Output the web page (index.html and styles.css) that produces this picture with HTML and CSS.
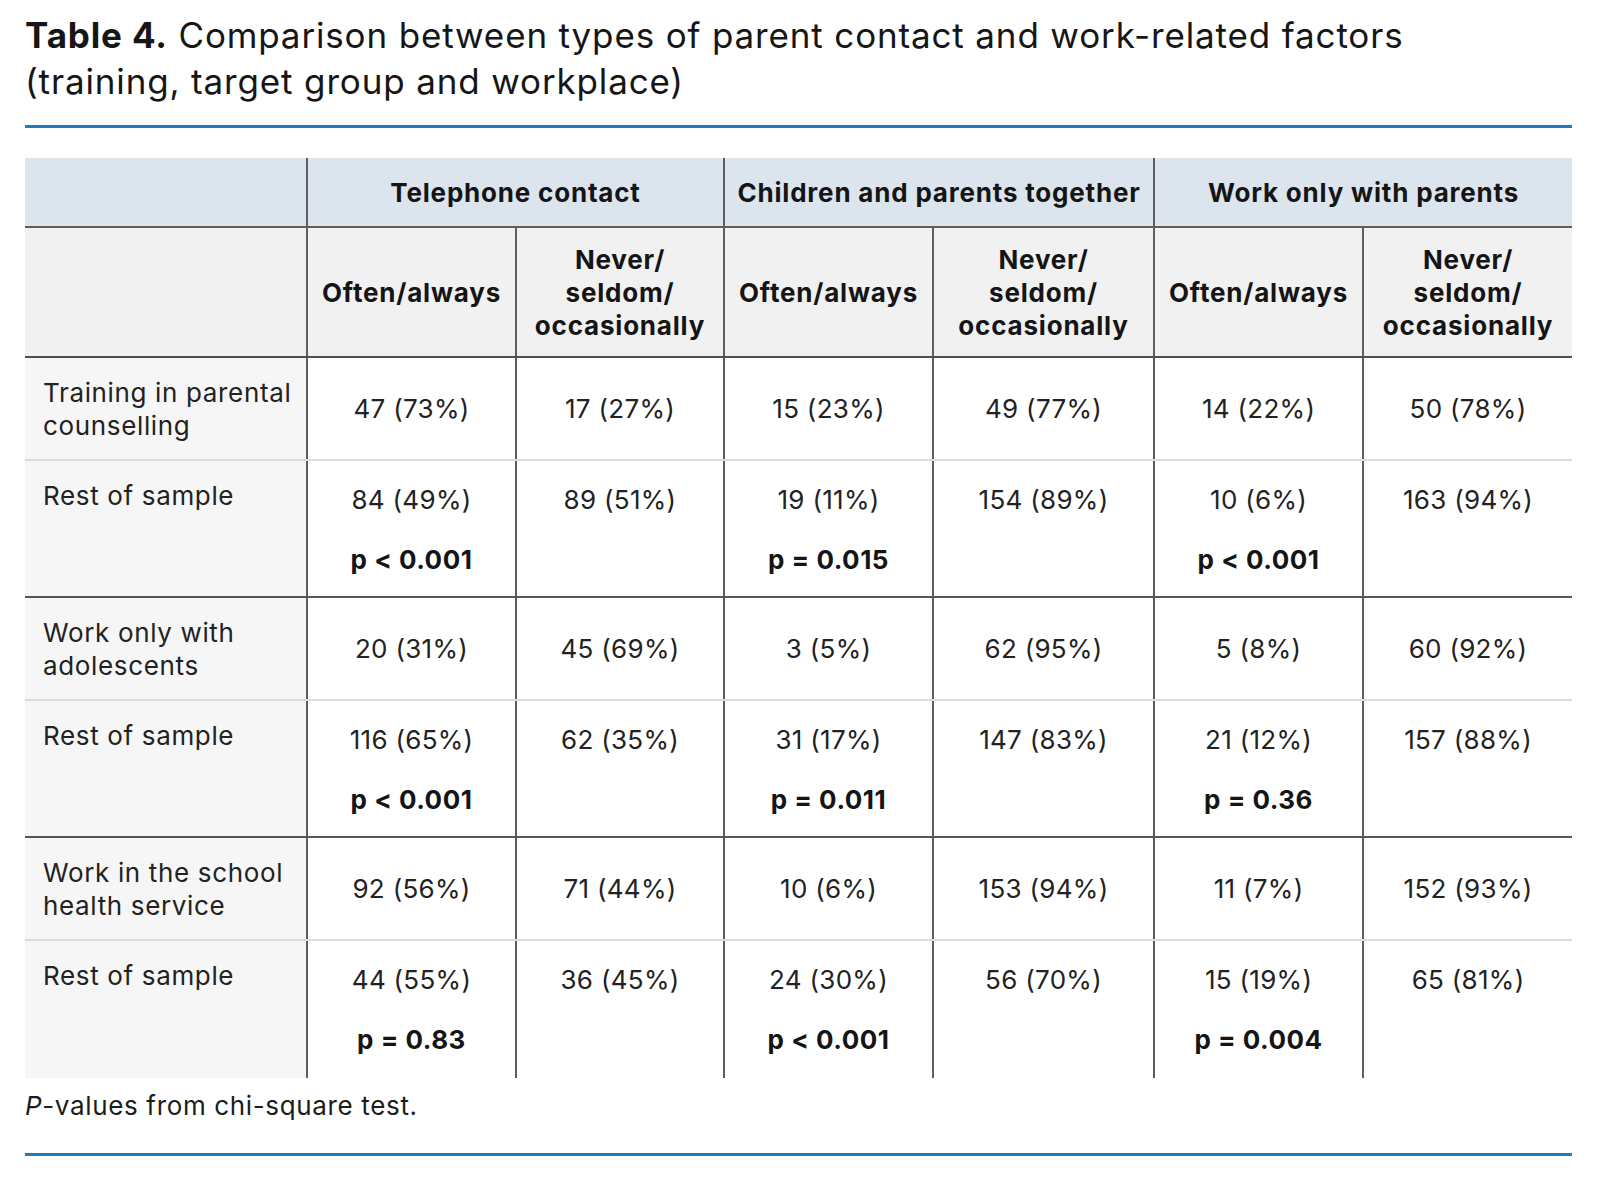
FILE: index.html
```html
<!DOCTYPE html>
<html lang="en">
<head>
<meta charset="utf-8">
<title>Table 4</title>
<link rel="stylesheet" href="styles.css">
</head>
<body>
<div class="page">
  <h1 class="title"><strong>Table 4.</strong> Comparison between types of parent contact and work-related factors (training, target group and workplace)</h1>
  <div class="rule"></div>
  <table class="data">
    <colgroup>
      <col class="c-label">
      <col class="c-209">
      <col class="c-208">
      <col class="c-209">
      <col class="c-221">
      <col class="c-209">
      <col class="c-209">
    </colgroup>
    <thead>
      <tr class="group">
        <th></th>
        <th colspan="2">Telephone contact</th>
        <th colspan="2">Children and parents together</th>
        <th colspan="2">Work only with parents</th>
      </tr>
      <tr class="sub">
        <th></th>
        <th>Often/always</th>
        <th>Never/<br>seldom/<br>occasionally</th>
        <th>Often/always</th>
        <th>Never/<br>seldom/<br>occasionally</th>
        <th>Often/always</th>
        <th>Never/<br>seldom/<br>occasionally</th>
      </tr>
    </thead>
    <tbody>
      <tr class="first">
        <td class="label">Training in parental counselling</td>
        <td>47 (73%)</td><td>17 (27%)</td><td>15 (23%)</td><td>49 (77%)</td><td>14 (22%)</td><td>50 (78%)</td>
      </tr>
      <tr class="rest">
        <td class="label">Rest of sample</td>
        <td><div>84 (49%)</div><div class="p">p &lt; 0.001</div></td>
        <td><div>89 (51%)</div></td>
        <td><div>19 (11%)</div><div class="p">p = 0.015</div></td>
        <td><div>154 (89%)</div></td>
        <td><div>10 (6%)</div><div class="p">p &lt; 0.001</div></td>
        <td><div>163 (94%)</div></td>
      </tr>
      <tr class="first">
        <td class="label">Work only with adolescents</td>
        <td>20 (31%)</td><td>45 (69%)</td><td>3 (5%)</td><td>62 (95%)</td><td>5 (8%)</td><td>60 (92%)</td>
      </tr>
      <tr class="rest">
        <td class="label">Rest of sample</td>
        <td><div>116 (65%)</div><div class="p">p &lt; 0.001</div></td>
        <td><div>62 (35%)</div></td>
        <td><div>31 (17%)</div><div class="p">p = 0.011</div></td>
        <td><div>147 (83%)</div></td>
        <td><div>21 (12%)</div><div class="p">p = 0.36</div></td>
        <td><div>157 (88%)</div></td>
      </tr>
      <tr class="first">
        <td class="label">Work in the school health service</td>
        <td>92 (56%)</td><td>71 (44%)</td><td>10 (6%)</td><td>153 (94%)</td><td>11 (7%)</td><td>152 (93%)</td>
      </tr>
      <tr class="rest last">
        <td class="label">Rest of sample</td>
        <td><div>44 (55%)</div><div class="p">p = 0.83</div></td>
        <td><div>36 (45%)</div></td>
        <td><div>24 (30%)</div><div class="p">p &lt; 0.001</div></td>
        <td><div>56 (70%)</div></td>
        <td><div>15 (19%)</div><div class="p">p = 0.004</div></td>
        <td><div>65 (81%)</div></td>
      </tr>
    </tbody>
  </table>
  <p class="note"><em>P</em>-values from chi-square test.</p>
  <div class="rule bottom"></div>
</div>
</body>
</html>
```

FILE: styles.css
```css
html, body {
  margin: 0;
  padding: 0;
  background: #ffffff;
}

body {
  font-family: Inter, "Noto Sans", "Liberation Sans", sans-serif;
  color: #1c1c1c;
}

.page {
  width: 1547px;
  padding: 12px 25px 0 25px;
}

.title {
  margin: 0;
  max-width: 1460px;
  font-size: 35px;
  line-height: 46px;
  font-weight: 400;
  letter-spacing: 0.85px;
  color: #161616;
}

.title strong {
  font-weight: 700;
}

.rule {
  height: 3px;
  background: #1a7dbf;
  margin-top: 21px;
}

.rule.bottom {
  margin-top: 31px;
}

.data {
  margin-top: 30px;
  width: 1547px;
  border-collapse: collapse;
  table-layout: fixed;
  font-size: 26px;
  line-height: 33px;
  letter-spacing: 0.3px;
}

.c-label { width: 282px; }
.c-209 { width: 209px; }
.c-208 { width: 208px; }
.c-221 { width: 221px; }

.data th {
  font-weight: 700;
  color: #151515;
  text-align: center;
  vertical-align: middle;
  letter-spacing: 0.8px;
  border-left: 2px solid #5e5e5e;
}

.data th:first-child,
.data td:first-child {
  border-left: none;
}

.data tr.group th {
  background: #dce5ee;
  height: 68px;
  padding: 0 2px;
  border-bottom: 2px solid #5e5e5e;
}

.data tr.sub th {
  background: #f1f1f1;
  padding: 14px 2px;
  height: 130px;
  box-sizing: border-box;
  border-bottom: 2px solid #4e4e4e;
}

.data td {
  text-align: center;
  color: #222222;
  background: #ffffff;
  border-left: 2px solid #5e5e5e;
  padding: 22px 4px 20px 4px;
}

.data td.label {
  text-align: left;
  background: #f6f6f6;
  letter-spacing: 0.65px;
  padding: 18px 4px 18px 18px;
}

.data tr.first td {
  vertical-align: middle;
  height: 103px;
  box-sizing: border-box;
  padding-top: 17px;
  padding-bottom: 17px;
  border-bottom: 2px solid #dcdcdc;
}

.data tr.rest td {
  vertical-align: top;
  border-bottom: 2px solid #555555;
}

.data tr.rest td.label {
  padding-top: 18px;
}

.data tr.last td {
  border-bottom: none;
  padding-bottom: 22px;
}

.data .p {
  margin-top: 27px;
  font-weight: 700;
  letter-spacing: 0.5px;
  color: #151515;
}

.note {
  margin: 11px 0 0 0;
  font-size: 26px;
  line-height: 33px;
  letter-spacing: 0.65px;
  color: #1c1c1c;
}
```
